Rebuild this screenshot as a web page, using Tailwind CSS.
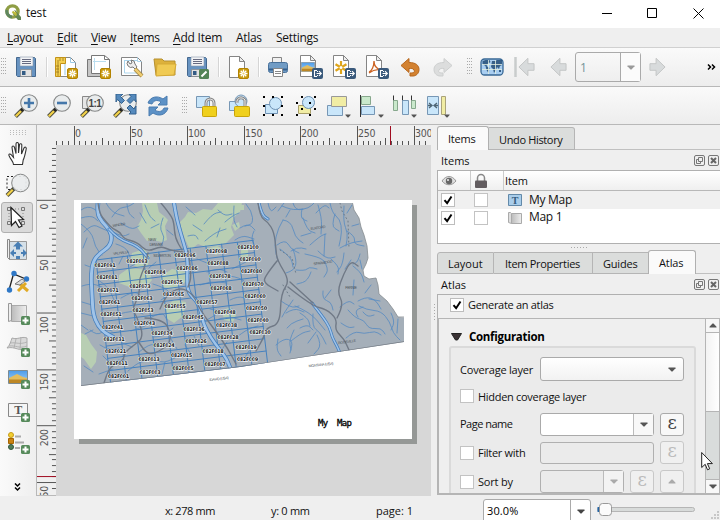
<!DOCTYPE html>
<html lang="en">
<head>
<meta charset="utf-8">
<title>test</title>
<script src="https://cdn.jsdelivr.net/npm/@tailwindcss/browser@4"></script>
</head>
<body class="w-[720px] h-[520px] overflow-hidden bg-[#efefef] font-['Open_Sans','Noto_Sans',sans-serif] text-[12px] leading-4 tracking-[-0.3px] text-[#111] whitespace-nowrap">
<svg class="absolute w-0 h-0">
  <defs>
    <linearGradient id="gray" x1="0" x2="1"><stop offset="0" stop-color="#bbb"/><stop offset="1" stop-color="#eee"/></linearGradient>
    <linearGradient id="sky" x1="0" x2="0" y1="0" y2="1"><stop offset="0" stop-color="#4a9bea"/><stop offset="1" stop-color="#a8d2f5"/></linearGradient>
    <symbol id="floppy" viewBox="0 0 24 24"><path d="M2.5 2.500h18l1 1v18h-18l-1-1z" fill="#6793c1" stroke="#44688f"/><path d="M6 2h13v9H6z" fill="#f2f3f5" stroke="#8799ad" stroke-width=".6"/><path d="M8 4.500h9M8 6.500h9M8 8.500h9" stroke="#666a80"/><path d="M6.500 14.500h11v7h-11z" fill="#e2e2e2" stroke="#858585" stroke-width=".7"/><path d="M8 16h3.500v4H8z" fill="#335c85"/></symbol>
    <symbol id="star" viewBox="0 0 11 11"><rect x=".5" y=".5" width="10" height="10" rx="1.500" fill="#c9990c" stroke="#b38300"/><path d="M5.500 1.500v8M1.500 5.500h8M2.700 2.700l5.600 5.600M8.300 2.700L2.700 8.300" stroke="#fff" stroke-width="1.300"/><circle cx="5.500" cy="5.500" r="1.100" fill="#edcf68"/></symbol>
    <symbol id="export" viewBox="0 0 11 11"><rect width="11" height="11" rx="2" fill="#39597b"/><path d="M5 2.500H2.500v6H5M4.500 5.500H9M7 3.200l2.300 2.300L7 7.800M5.500 3v1M5.500 7v1" stroke="#fff" stroke-width="1.100" fill="none"/></symbol>
    <symbol id="plus" viewBox="0 0 9 9"><rect width="9" height="9" rx="1.500" fill="#568a5b"/><path d="M4.500 1.500v6M1.500 4.500h6" stroke="#fff" stroke-width="2"/></symbol>
    <symbol id="page" viewBox="0 0 24 24"><path d="M3.500 .5h10l5 5v16h-15z" fill="#fff" stroke="#858585"/><path d="M13.500 .5v5h5z" fill="#eee" stroke="#858585"/></symbol>
    <symbol id="lens" viewBox="0 0 24 24"><path d="M1.500 22.500L9 15" stroke="#4a4a3b" stroke-width="4"/><path d="M1.800 22.200L7.500 16.500" stroke="#f3d249" stroke-width="2.200"/><path d="M7 17l3-3" stroke="#252525" stroke-width="3"/><circle cx="15" cy="9" r="8.300" fill="#e9eced" stroke="#858787" stroke-width="1.100"/></symbol>
    <symbol id="padlock" viewBox="0 0 16 20"><path d="M4 11V6a4 4 0 0 1 8 0v5" fill="none" stroke="#8a8a8a" stroke-width="3"/><path d="M4 11V6a4 4 0 0 1 8 0v5" fill="none" stroke="#ddd" stroke-width="1"/><rect x=".5" y="9.500" width="14" height="10" rx=".8" fill="#f0d01c" stroke="#c9a409"/></symbol>
    <symbol id="arrowL" viewBox="0 0 18 20"><path d="M1 10L10.500 .8v5.700H17v7h-6.500v5.700z" fill="#d8dbdc" stroke="#c2c5c5"/></symbol>
    <symbol id="dd" viewBox="0 0 8 5"><path d="M.5 .5h7v.8L4.500 4.500h-1L.5 1.300z" fill="currentColor"/></symbol>
    <symbol id="dots" viewBox="0 0 5 20"><path d="M.5 1v18M2.500 1v18M4.500 1v18" stroke="#aaa" stroke-dasharray="1 2"/></symbol>
    <symbol id="sep" viewBox="0 0 2 20"><path d="M.5 0v20" stroke="#d5d5d5"/><path d="M1.500 0v20" stroke="#fff"/></symbol>
    <symbol id="check" viewBox="0 0 14 14"><rect x=".5" y=".5" width="13" height="13" fill="#fff" stroke="#bdbdbd"/><path d="M3.500 7.200l2.600 3L10.500 3.500" fill="none" stroke="#000" stroke-width="2"/></symbol>
    <symbol id="box" viewBox="0 0 14 14"><rect x=".5" y=".5" width="13" height="13" fill="#fff" stroke="#c3c3c3"/></symbol>
    <symbol id="float" viewBox="0 0 11 11"><rect x=".5" y=".5" width="10" height="10" rx="1.500" fill="none" stroke="#777"/><path d="M4.500 2.500h4v4h-4zM6.500 6.500v2h-4v-4h2" fill="none" stroke="#777"/></symbol>
    <symbol id="close" viewBox="0 0 11 11"><rect x=".5" y=".5" width="10" height="10" rx="1.500" fill="none" stroke="#777"/><path d="M3 3l5 5M8 3L3 8" stroke="#666" stroke-width="2"/></symbol>
    <symbol id="picture" viewBox="0 0 20 14"><path d="M.5 .5h19v13H.5z" fill="url(#sky)" stroke="#7c8b92"/><path d="M1 8l8-4 6 3 4 1v5H1z" fill="#e2bd60"/><path d="M1 9.500h18V13H1z" fill="#bd8725"/></symbol>
  </defs>
</svg>

<header class="h-7 bg-white flex items-center pl-[5px]">
  <svg class="w-4 h-4 -mt-1" viewBox="0 0 16 16"><circle cx="7.500" cy="7.500" r="5.600" fill="none" stroke="#8f9e45" stroke-width="3.400"/><path d="M7 13a5.600 5.600 0 0 1-5-7" fill="none" stroke="#5f8660" stroke-width="3"/><path d="M7 6h3l6 7v3h-3L7 9z" fill="#648653"/><path d="M8 7l3 3" stroke="#edcc3a" stroke-width="2"/><circle cx="7.500" cy="7.500" r="2.300" fill="#fff"/><path d="M7.500 7.500l4 4" stroke="#b8b83a" stroke-width="2"/></svg>
  <span class="ml-[5px] -mt-[3px] tracking-[-0.2px]">test</span>
  <svg class="ml-auto mr-[16px] -mt-[3px] w-[103px] h-3" viewBox="0 0 103 12"><path d="M1 6.500h10M46.500 1.500h9v9h-9zM92.500 1.500l10 10M102.500 1.500l-10 10" fill="none" stroke="#000"/></svg>
</header>
<nav class="h-[19px] flex items-center bg-[#efefef]">
  <span class="w-[49px] ml-[7px]"><u class="underline-offset-2">L</u>ayout</span>
  <span class="w-[34px] ml-px"><u class="underline-offset-2">E</u>dit</span>
  <span class="w-[39px]"><u class="underline-offset-2">V</u>iew</span>
  <span class="w-[43px]"><u class="underline-offset-2">I</u>tems</span>
  <span class="w-[63px] tracking-[-0.2px]"><u class="underline-offset-2">A</u>dd Item</span>
  <span class="w-[40px]">Atlas</span>
  <span>Settings</span>
</nav>

<div class="h-10 border-t border-b border-t-[#d0d0d0] border-b-[#b8b8b8] bg-linear-to-b from-[#fafafa] to-[#ededed] flex items-center">
  <svg class="w-[5px] h-5 ml-px mr-1 shrink-0"><use href="#dots"/></svg>
  <div class="w-[33px] pr-px flex justify-center shrink-0"><svg class="w-6 h-6"><use href="#floppy"/></svg></div>
  <div class="w-[7px] flex justify-center shrink-0"><svg class="w-[2px] h-5"><use href="#sep"/></svg></div>
  <div class="w-[33px] pr-px flex justify-center shrink-0"><svg class="w-6 h-6" viewBox="0 0 24 24"><path d="M4.500 2.500h12l5 5v14h-17z" fill="#fff" stroke="#858585"/><path d="M16.500 2.500v5h5M11 7v13" fill="none" stroke="#9bc8e5"/><path d="M1.500 2.500h10v6h-5v13h-5z" fill="#f3cf50" stroke="#c29219"/><path d="M4 5v16M6 3v3M9 3v3M2 11h3M2 14h3M2 17h3" stroke="#9b761d" stroke-width=".8"/><use href="#star" x="13" y="13" width="11" height="11"/></svg></div>
  <div class="w-[33px] pr-px flex justify-center shrink-0"><svg class="w-6 h-6" viewBox="0 0 24 24"><path d="M.5 4.500h5v13h13v4H.500z" fill="#c5c5c5" stroke="#777"/><path d="M4.500 .5h13l5 4v14h-18z" fill="#fff" stroke="#777"/><path d="M17.500 .5v4h5" fill="none" stroke="#777"/><path d="M7.500 3v12M6 6.500h13" stroke="#b9ddef"/><use href="#star" x="13" y="13" width="11" height="11"/></svg></div>
  <div class="w-[33px] pr-px flex justify-center shrink-0"><svg class="w-6 h-6" viewBox="0 0 24 24"><path d="M1.500 2.500h16l4 4v14h-20z" fill="#fff" stroke="#858585"/><path d="M17.500 2.500v4h4M4 5.500h13M4.500 5v13h14" fill="none" stroke="#abd5ed"/><path d="M8 6a4 4 0 0 0 5 6l2 2 2-2-2-3a4 4 0 0 0-4-4l1 3-2 1z" fill="#eee" stroke="#777"/><path d="M15 14l7 7" stroke="#9d8041" stroke-width="4"/><path d="M15 14l7 7" stroke="#edcb70" stroke-width="2.500"/></svg></div>
  <div class="w-[33px] pr-px flex justify-center shrink-0"><svg class="w-6 h-6" viewBox="0 0 24 24"><path d="M1 4h8l2 2h11v14H3z" fill="#ddb13c" stroke="#b58f2e"/><path d="M4 9h19l-2 11-18 1z" fill="#f0ca53" stroke="#d5a934"/></svg></div>
  <div class="w-[33px] pr-px flex justify-center shrink-0"><svg class="w-6 h-6" viewBox="0 0 24 24"><use href="#floppy" width="24" height="24" x="-1"/><rect x="13" y="14" width="10" height="10" rx="1.500" fill="#548457"/><path d="M15.500 21.500l5-5" stroke="#fff" stroke-width="2"/></svg></div>
  <div class="w-[7px] flex justify-center shrink-0"><svg class="w-[2px] h-5"><use href="#sep"/></svg></div>
  <div class="w-[33px] pr-px flex justify-center shrink-0"><svg class="w-6 h-6" viewBox="0 0 24 24"><use href="#page" width="24" height="24" y="1"/><use href="#star" x="12" y="13" width="11" height="11"/></svg></div>
  <div class="w-[7px] flex justify-center shrink-0"><svg class="w-[2px] h-5"><use href="#sep"/></svg></div>
  <div class="w-[33px] pr-px flex justify-center shrink-0"><svg class="w-6 h-6" viewBox="0 0 24 24"><path d="M6.500 2.500h9v7h-9z" fill="#f0f0f0" stroke="#858585"/><rect x="2.500" y="7.500" width="19" height="10" rx="2" fill="#719cc5" stroke="#48719b"/><path d="M3 14.500h18" stroke="#345f8d" stroke-width="2"/><path d="M7.500 13.500h9v8h-9z" fill="#fff" stroke="#858585"/><path d="M9 16.500h6M9 18.500h6" stroke="#888"/></svg></div>
  <div class="w-[33px] pr-px flex justify-center shrink-0"><svg class="w-6 h-6" viewBox="0 0 24 24"><use href="#page" width="24" height="24" x="-2" y="0"/><use href="#picture" x="2" y="7" width="14" height="10" preserveAspectRatio="none"/><use href="#export" x="13" y="13" width="11" height="11"/></svg></div>
  <div class="w-[33px] pr-px flex justify-center shrink-0"><svg class="w-6 h-6" viewBox="0 0 24 24"><use href="#page" width="24" height="24" x="-2" y="0"/><path d="M9 6v13M3.500 9.200l11 6.600M14.500 9.200l-11 6.600" stroke="#dfa51a" stroke-width="2.200"/><circle cx="9" cy="12.500" r="1.500" fill="#fff"/><use href="#export" x="13" y="13" width="11" height="11"/></svg></div>
  <div class="w-[33px] pr-px flex justify-center shrink-0"><svg class="w-6 h-6" viewBox="0 0 24 24"><use href="#page" width="24" height="24" x="-2" y="0"/><path d="M4 17c3-1 5-6 5-11 0 5 3 8 7 9-4-1-8 0-12 3" fill="none" stroke="#cc6424" stroke-width="1.300"/><use href="#export" x="13" y="13" width="11" height="11"/></svg></div>
  <div class="w-[33px] pr-px flex justify-center shrink-0"><svg class="w-6 h-6" viewBox="0 0 24 24"><path d="M3 10.500l8-7v4c7 0 10 3 10 7 0 4-3 6.500-6 6.500h-3v-3c4 0 5-1 4-3-1-2-3-1.500-5-1.500v4z" fill="#d38231" stroke="#b7671d"/></svg></div>
  <div class="w-[33px] pr-px flex justify-center shrink-0"><svg class="w-6 h-6" viewBox="0 0 24 24"><path d="M21 10.500l-8-7v4c-7 0-10 3-10 7 0 4 3 6.500 6 6.500h3v-3c-4 0-5-1-4-3 1-2 3-1.500 5-1.500v4z" fill="#dcdddd" stroke="#cdcfcf"/></svg></div>
  <div class="w-4 flex justify-center pl-[3px] shrink-0"><svg class="w-[5px] h-5"><use href="#dots"/></svg></div>
  <div class="w-[33px] pr-px flex justify-center shrink-0"><svg class="w-6 h-6" viewBox="0 0 24 24"><rect x="1" y="4" width="22" height="16" rx="3.500" fill="#a9cef1" stroke="#386895" stroke-width="1.300"/><path d="M2.500 6l3-1h4l1 2-3 2-1 2 3 2-1 5-2-3-1-4-3-2zM12 6h3l2-1h5v5l-2 1-1 3-2-2-1 3-2 3-1-4-2-2zM19 15h2v2h-2z" fill="#224b76" fill-opacity=".85"/><path d="M2 9.500h20M2 14.500h20M8.500 5v14M15.500 5v14" stroke="#e5f0e1" stroke-width=".8"/></svg></div>
  <div class="w-[33px] pr-px flex justify-center shrink-0"><svg class="w-6 h-6" viewBox="0 0 24 24"><path d="M2.500 2v20" stroke="#c9cccc" stroke-width="2.500"/><use href="#arrowL" x="5" y="2" width="17" height="20"/></svg></div>
  <div class="w-[33px] flex justify-center shrink-0"><svg class="w-[17px] h-5"><use href="#arrowL"/></svg></div>
  <div class="w-[66px] h-[30px] border border-[#aaa] rounded-[3px] flex items-center shrink-0 text-[#759398]"><span class="pl-1 w-[45px] pt-[2px]">1</span><div class="w-5 h-7 border-l border-[#aaa] bg-[#fbfbfb] flex items-center justify-center text-[#9a9a9a]"><svg class="w-2 h-[5px]"><use href="#dd"/></svg></div></div>
  <div class="w-[33px] flex justify-center shrink-0"><svg class="w-[17px] h-5 -scale-x-100"><use href="#arrowL"/></svg></div>
  <svg class="w-[9px] h-2 ml-[33px] shrink-0" viewBox="0 0 9 8"><path d="M1 1.500l2.500 2.500L1 6.500M5 1.500L7.500 4 5 6.500" fill="none" stroke="#000" stroke-width="1.500"/></svg>
</div>

<div class="h-[38px] border-b border-[#b8b8b8] bg-linear-to-b from-[#fafafa] to-[#ededed] flex items-center">
  <svg class="w-[5px] h-5 ml-px mr-1 shrink-0"><use href="#dots"/></svg>
  <div class="w-[33px] pr-px flex justify-center"><svg class="w-6 h-6" viewBox="0 0 24 24"><use href="#lens" width="24" height="24"/><path d="M15 4v10M10 9h10" stroke="#4477aa" stroke-width="2.600"/></svg></div>
  <div class="w-[33px] pr-px flex justify-center"><svg class="w-6 h-6" viewBox="0 0 24 24"><use href="#lens" width="24" height="24"/><path d="M10 9h10" stroke="#4477aa" stroke-width="2.600"/></svg></div>
  <div class="w-[33px] pr-px flex justify-center"><svg class="w-6 h-6" viewBox="0 0 24 24"><path d="M2.500 2.500h13v12h-13z" fill="#e5e5e5" stroke="#888"/><use href="#lens" width="24" height="24"/><text x="14.800" y="12.500" text-anchor="middle" font-size="10" font-family="Liberation Sans" font-weight="bold" letter-spacing="-.6" fill="#444">1:1</text></svg></div>
  <div class="w-[33px] pr-px flex justify-center"><svg class="w-6 h-6" viewBox="0 0 24 24"><use href="#lens" width="24" height="24"/><path d="M3 0h7L7.500 2.500l4 4-3 3-4-4L3 8zM16 0h7v8l-2-2.500-4 4-3-3 4-4zM23 20h-7l2-2-4-4 3-3 4 4 2-3z" fill="#558abd" stroke="#32618e"/></svg></div>
  <div class="w-[33px] pr-px flex justify-center"><svg class="w-6 h-6" viewBox="0 0 24 24"><path d="M2 9C4 3 11 1 17 5l4-3v9h-9l3-3c-4-3-8-1-9 2z" fill="#5c91c6" stroke="#4a7cb0"/><path d="M22 14c-2 7-9 9-15 5l-4 3v-9h9l-3 3c4 3 8 1 9-2z" fill="#5c91c6" stroke="#4a7cb0"/></svg></div>
  <div class="w-4 flex justify-center shrink-0 pl-[3px]"><svg class="w-[5px] h-5"><use href="#dots"/></svg></div>
  <div class="w-[33px] pr-px flex justify-center"><svg class="w-6 h-6" viewBox="0 0 24 24"><path d="M1.500 2.500h13v11h-13z" fill="#c9e6fa" stroke="#7797b5"/><use href="#padlock" x="7" y="3" width="16" height="20"/></svg></div>
  <div class="w-[33px] pr-px flex justify-center"><svg class="w-6 h-6" viewBox="0 0 24 24"><path d="M1.500 7.500h11v9h-11z" fill="#c9e6fa" stroke="#7797b5"/><circle cx="13" cy="7" r="6" fill="#c9e6fa" stroke="#7797b5"/><path d="M9 9c-1-5 5-7 8-3v7" fill="none" stroke="#888" stroke-width="3"/><path d="M9 9c-1-5 5-7 8-3v7" fill="none" stroke="#eee"/><rect x="6.500" y="12.500" width="15" height="10" rx="1" fill="#f0d01c" stroke="#c9a409"/></svg></div>
  <div class="w-[33px] pr-px flex justify-center"><svg class="w-6 h-6" viewBox="0 0 24 24"><path d="M4.500 10.500h12v9h-12z" fill="#c9e6fa" stroke="#6e91b3"/><circle cx="14.500" cy="9.500" r="6" fill="#c9e6fa" stroke="#6e91b3"/><path d="M2 2h2v2H2zM11 2h2v2h-2zM20 2h2v2h-2zM2 11h2v2H2zM20 11h2v2h-2zM2 20h2v2H2zM11 20h2v2h-2zM20 20h2v2h-2z"/></svg></div>
  <div class="w-[33px] pr-px flex justify-center"><svg class="w-6 h-6" viewBox="0 0 24 24"><path d="M4.500 11.500h12v8h-12z" fill="#f1eda4" stroke="#aaa06a"/><circle cx="14.500" cy="8.500" r="6" fill="#c9e6fa" stroke="#6e91b3"/><path d="M7 2h2v2H7zM20 2h2v2h-2zM2 8h2v2H2zM7 14h2v2H7zM20 14h2v2h-2zM15 8h2v2h-2zM2 20h2v2H2zM15 20h2v2h-2z"/></svg></div>
  <div class="w-[33px] pr-px flex justify-center text-[#555]"><svg class="w-6 h-6" viewBox="0 0 24 24"><path d="M.5 11.500h15v10h-15z" fill="#c9e6fa" stroke="#7797b5"/><path d="M4.500 2.500h15v10h-15z" fill="#f1eda4" stroke="#999"/><use href="#dd" x="18" y="20" width="6" height="4"/></svg></div>
  <div class="w-[33px] pr-px flex justify-center text-[#555]"><svg class="w-6 h-6" viewBox="0 0 24 24"><path d="M.5 1v22" stroke="#333"/><path d="M1.500 2.500h9v8h-9z" fill="#cae9cc" stroke="#87a88d"/><path d="M1.500 12.500h13v8h-13z" fill="#c9e6fa" stroke="#7797b5"/><use href="#dd" x="18" y="20" width="6" height="4"/></svg></div>
  <div class="w-[33px] pr-px flex justify-center text-[#555]"><svg class="w-6 h-6" viewBox="0 0 24 24"><path d="M.5 1.500v6M9.500 1.500v6M18.500 1.500v6" stroke="#333"/><path d="M.5 6.500h4v10h-4zM18.500 6.500h4v8h-4z" fill="#cae9cc" stroke="#87a88d"/><path d="M9.500 6.500h6v14h-6z" fill="#c9e6fa" stroke="#7797b5"/><use href="#dd" x="18" y="20" width="6" height="4"/></svg></div>
  <div class="w-[33px] pr-px flex justify-center text-[#555]"><svg class="w-6 h-6" viewBox="0 0 24 24"><path d="M1.500 2.500h11v18h-11z" fill="#c9e6fa" stroke="#7797b5"/><path d="M15.500 2.500h4v18h-4z" fill="#f1eda4" stroke="#aaa37a"/><path d="M2 11.500h3M12 11.500H9M3 9l3 2.500L3 14M11 9l-3 2.500 3 2.500" fill="none" stroke="#4e6574" stroke-width="1.300"/><use href="#dd" x="18" y="20" width="6" height="4"/></svg></div>
</div>

<main class="h-[371px] flex">
  <aside class="w-[37px] border-r border-[#b8b8b8] bg-linear-to-r from-[#fafafa] to-[#efefef] pl-px flex flex-col items-center shrink-0">
    <svg class="w-[17px] h-[5px] mt-[5px] mb-[2px] shrink-0" viewBox="0 0 17 5"><path d="M0 .5h17M0 2.500h17M0 4.500h17" stroke="#bbb" stroke-dasharray="1 2"/></svg>
    <div class="h-[32.2px] pr-[1px] flex items-center pt-[2px]"><svg class="w-6 h-6" viewBox="0 0 24 24"><path d="M7.500 22.500c0-3-3-5-4.500-9-.5-1.500 1-2 2-1l2.500 3-1.500-10c0-2 2-2 2.500 0l1.500 6V2c0-2 2.500-2 2.500 0v9l1-8c.3-2 2.500-1.500 2.300.3L15.500 12l2.500-6c.8-1.800 2.600-.8 2.200 1-1 5-1.500 8-3 11l-.7 4.500z" fill="#fff" stroke="#333" stroke-width="1.100"/></svg></div>
    <div class="h-[32.2px] pr-[1px] flex items-center"><svg class="w-[26px] h-[26px]" viewBox="0 0 26 26"><path d="M2 4.500h19v13H2z" fill="none" stroke="#222" stroke-dasharray="2 2"/><path d="M2 23.500l8-8" stroke="#4a4a3b" stroke-width="4"/><path d="M2.200 23.300l5.500-5.500" stroke="#f3d249" stroke-width="2.200"/><circle cx="15.500" cy="11" r="8.800" fill="#e9eced" fill-opacity=".93" stroke="#858787"/></svg></div>
    <div class="h-[32.2px] pr-[3px] flex items-center"><div class="w-8 h-[31px] bg-[#dadada] border border-[#b0b0b0] rounded-[3px] flex items-center justify-center"><svg class="w-6 h-6" viewBox="0 0 24 24"><path d="M4 4h14v14H4z" fill="none" stroke="#888" stroke-dasharray="1 2"/><path d="M2.500 2.500h3v3h-3zM16.500 2.500h3v3h-3zM2.500 16.500h3v3h-3zM16.500 16.500h3v3h-3z" fill="#ddd" stroke="#777"/><path d="M6 2.500l12.500 12-5 .5 3.500 6-3 1.500-3.500-6-4 4z" fill="#fff" stroke="#222" stroke-width="1.200"/></svg></div></div>
    <div class="h-[32.2px] pr-[4px] flex items-center"><svg class="w-6 h-6" viewBox="0 0 24 24"><path d="M4.500 3.500h17v18h-17z" fill="#d5e0e8" stroke="#999"/><path d="M4.500 1.500h-2v18l2 2z" fill="#eee" stroke="#888"/><path d="M13 3.500l5 5h-3v3h-4v-3H8zM5 15l4-4v3h2v2H9v3zM22 15l-4-4v3h-2v2h2v3zM11 18h4v3h-4z" fill="#487fb5"/></svg></div>
    <div class="h-[32.2px] pr-[2px] flex items-center"><svg class="w-6 h-6" viewBox="0 0 24 24"><path d="M3 20L7.500 4 21 9.500" fill="none" stroke="#222" stroke-width="1.300"/><circle cx="3.500" cy="20" r="2.700" fill="#2f78c7"/><circle cx="8" cy="3.500" r="2.700" fill="#2f78c7"/><circle cx="20.500" cy="9" r="2.700" fill="#2f78c7"/><path d="M12 21l8-8M14 14l8 7" stroke="#e1aa24" stroke-width="3"/><path d="M9 14l7-5 3 2-5 4z" fill="#ddd" stroke="#777"/></svg></div>
    <div class="h-[32.2px] pr-[2px] flex items-center"><svg class="w-6 h-6" viewBox="0 0 24 24"><path d="M5.500 3.500h15v16h-15z" fill="url(#gray)" stroke="#aaa"/><path d="M2.500 1.500h3v17l-3 1z" fill="#eee" stroke="#999"/><use href="#plus" x="15" y="14" width="9" height="9"/></svg></div>
    <div class="h-[32.2px] pr-[2px] flex items-center"><svg class="w-6 h-6" viewBox="0 0 24 24"><path d="M6 4c6 2 9-2 15 0v11c-7 3-12-3-20-1 3-3 4-7 5-10z" fill="#d9d9d9" stroke="#aaa"/><path d="M4 9c7-1 9 2 17-1M3 12c7-1 10 3 18 0M10 5l-2 9M15 3l-1 12" fill="none" stroke="#aaa" stroke-width=".8"/><use href="#plus" x="15" y="14" width="9" height="9"/></svg></div>
    <div class="h-[32.2px] pr-[2px] flex items-center"><svg class="w-6 h-6" viewBox="0 0 24 24"><use href="#picture" x="2" y="4" width="20" height="14"/><use href="#plus" x="15" y="14" width="9" height="9"/></svg></div>
    <div class="h-[32.2px] pr-[2px] flex items-center"><svg class="w-6 h-6" viewBox="0 0 24 24"><path d="M2.500 4.500h19v13h-19z" fill="#f5f5f5" stroke="#888"/><text x="12" y="15" text-anchor="middle" font-family="Liberation Serif" font-size="12" font-weight="bold" fill="#555">T</text><use href="#plus" x="15" y="14" width="9" height="9"/></svg></div>
    <div class="h-[32.2px] pr-[2px] flex items-center"><svg class="w-6 h-6" viewBox="0 0 24 24"><circle cx="5" cy="4" r="2.500" fill="#f3cf31" stroke="#c69b18"/><path d="M2.500 7.500h5v5h-5z" fill="#c98211" stroke="#a56400"/><circle cx="5" cy="16" r="2.500" fill="#517d59" stroke="#31573b"/><path d="M9 5.500h6M9 11.500h9M9 17h5" stroke="#aaa" stroke-width="1.800"/><use href="#plus" x="15" y="14" width="9" height="9"/></svg></div>
    <svg class="w-[7px] h-[9px] mt-[24px] mr-[2px] shrink-0" viewBox="0 0 7 9"><path d="M1 .5l2.500 2.500L6 .5M1 4.500L3.500 7 6 4.500" fill="none" stroke="#000" stroke-width="1.500"/></svg>
  </aside>

  <section class="w-[394px] h-[371px] shrink-0 grid grid-cols-[19px_375px] grid-rows-[20px_351px]">
    <svg class="col-span-2 w-[394px] h-5" viewBox="37 125 394 20" font-family="DejaVu Sans Condensed" font-size="10.500" fill="#555"><g id="hruler"></g><path d="M390.500 126v19" stroke="#a00c20"/></svg>
    <svg class="w-[19px] h-[351px] border-b border-[#b8b8b8]" viewBox="37 145 19 351" font-family="DejaVu Sans Condensed" font-size="10.500" fill="#555"><g id="vruler"></g><path d="M37 477.500h19" stroke="#a00c20"/></svg>
    <div class="bg-[#d7d7d7] pl-[18px] pt-[55px]">
      <div class="w-[338px] h-[239px] bg-white shadow-[5px_5px_0_#959896] pl-[7px] pt-[3px] relative">
        <svg class="w-[324px] h-[190px]" viewBox="81 203 324 190">
          <defs><clipPath id="land"><path d="M81 203H352.500L354 210 359 218 361 227 364 235 367 246 368 258 366 264 363 270 364 276 369 279 376 278 378 285 379 294 387 301 393 309 398 317 404 317.500V342L240 367 81 386z"/></clipPath></defs>
          <g clip-path="url(#land)" fill="none" stroke-linejoin="round" stroke-linecap="round">
            <path d="M81 203h324v190H81z" fill="#a5afb9"/>
            <g fill="#b8ceb3">
              <path d="M142 203h15l2 9 5 4 4 4-3 6 2 14-5 2-10-2-5 1-6-8-4-6 4-7 2-9z"/>
              <path d="M180 222l5-5 3-5 8 1 7-4 9 1 6-7h24l-2 9-6 5-3 10 3 8-8 8-8 3-12 1-8-3-8 6-5-11-3-8z"/>
              <path d="M232 225l7-3 1 5-5 4zM132 253l12-4 6 7-2 9-9 3-9-5zM119 275l10-7 20 2 3 10-6 7-14 1-13-5zM160 277l12-8 14 3 1 9-13 8-11-2zM166 306l8-6 12 2-3 14-9 7-8-5zM222 311l8-4 6 8-3 7-9-2zM81 333l5 2 5 9 6 8-1 10-5 7-7-10-3-2zM240 205h4v5h-4zM241 250h7v7h-7zM205 249l12-3 9 4-10 5z"/>
            </g>
            <g stroke="#5a8dc2" stroke-width=".85" class="winding">
              <path d="M81 210l7-5 12 8M81 218l10-3 7 6M84 232l8-8 9 4 9 4M81 224l11 8 3 15 7 8M83 248l4-10M106 203l5 9 13 4M112 217l6-9 10-1 6-4M127 204l1 9 6 5M113 232l9 5 7-3M116 244l10 3 4 10M121 223l10 7 8-4M140 213l6 10M145 205l4 11 6 5M151 228l8-4M163 218l-4 10 6 9-4 9M167 230l6 5M186 207l9 8M193 225l9 6M204 224l8-10 9-2M218 210l6 6 8-2M205 241l9-8 12-4M225 222l7-6 7-3M188 236l7-2 3 5M234 206l-1 13 4 8M220 228l-3 9M246 204l6 7 1 13-8 2M240 228l8-5 7 7M235 240l7-5 12 4M254 231l-4 8 8 10M268 203l2 10 6-6M278 211l6-8M282 206l9 4 12-1M293 203l2 8 14-3 5-5M286 217l4-7M302 209l-2 9 7 3M303 218l4 12 8 3M283 220l-5 8-4 18 4 15M283 220l8 1 4 16 8 6M277 245l8-6 6 10 8 4M291 251l6-4 9 2M316 213l8-9 5 4M318 205l4 13-1 16M330 203l2 10 8 6 2 13-3 14M344 206l-1 16 5 11-2 13M352 205l-5 8M352 226l7-2M347 231l8 5-1 8 10 2M340 248l9-5 13-2M335 214l-4 12 8 5M325 234l-1 22M310 245l10-9 6-2M318 251l8 8 9-2M301 236l10-3M280 249l11 8 2 10M293 249l4 12-3 9-8 3M296 270l9 1 4-4 8 2M311 272l-3 9-11 3M305 254l14 3 6 5M324 261l5 8-5 8M331 259l8 7-1 8M344 253l-1 11-6 8M351 260l-6 9M360 254l-2 8-5 2M281 301l10 7 8-2M293 300l-7 10-4 7M286 313l8-5 10 4M295 306l15 6 15 18M300 313l8 5 2 8M313 314l-1 13 8 5 6 12M287 328l4-5 12-4M291 341l10-8 9-2M278 339l-2 10 5 7M276 345l8-7 9 3-3 12M294 330l-5 10 2 10M300 328l7-4 6 6M308 343l8-11M317 335l5 10-8 9M340 307l8-7 6 4M348 310l7 8 9 2 5 9 12-1 4 6M341 323l7 5 6-1M346 338l8-7 10 3 11-3 6 4M358 317l-4-6 9-4M359 306l8 4 14 1 9 11 3 11 7 7M369 299l11 2M358 301l7-4 10 2 6 10M363 312l4 5 7-2M391 313l4 8-4 9M398 319l-1 14M331 290l-6 8M323 291l-1 8 9 3 2 8M353 266l8 6 3 10M360 260l2 9M354 280l-1 15M371 285l-6 8"/>
              <path d="M85 265l8 3M82 286l9-3 11 4M82 302l10 3M98 280l10 6 6 14M81 313l12 3M90 330l7 6 9-7 6 2M81 325l7 5M85 334l8-4M84 366l9 6M100 345l8 5 11-2M103 356l7 8 9-4M99 374l14-5M119 264l4-8M130 267l10-6M149 268l7-6M121 298l12-7 7 4M119 314l15-4 9 4M150 318l12-7 5 9M131 331l14-5M122 343l10 4M139 352l11-9 8 4M128 371l9-8 9-2M153 358l8 6 14-6M162 374l3-12M153 284l13 4 5 7M161 300l8-5M173 328l-8 8-12 1M177 349l-6-10M191 354l-6-9M199 346l-5-10M205 321l14-8M207 272l10-4 10 4M200 285l10-4 17 2M210 309l10 3 12-3M216 320l11-4 14 4M237 337l10-8 11-3M230 300l8-4 10 3M221 351l6-9M249 351l-5 8M230 276l11 2 6 6M197 259l10 4M232 269l14-7"/>
            </g>
            <g stroke="#4581bf" stroke-width="1" id="grid"></g>
            <g class="winding">
              <path d="M98 203l-1 10 5 9 8 8 2 9-3 8-9 6-7 8-2 15 1 18 1 20 5 12 7 7 8 4" stroke="#427dbd" stroke-width="4.500"/><path d="M98 203l-1 10 5 9 8 8 2 9-3 8-9 6-7 8-2 15 1 18 1 20 5 12 7 7 8 4" stroke="#a0c4e9" stroke-width="3"/>
              <path d="M174 203l2 12 3 12 4 14 5 17-1 20 1 15 9 8 4 10 2 12 8 15 9 12 7 9 5 14" stroke="#427dbd" stroke-width="4"/><path d="M174 203l2 12 3 12 4 14 5 17-1 20 1 15 9 8 4 10 2 12 8 15 9 12 7 9 5 14" stroke="#a0c4e9" stroke-width="2.500"/>
              <path d="M259 203l3 12 6 4M109 229l9 10 20 7 10 12M312 303l11 14 7 11 2 9 5 9 3 7" stroke="#427dbd" stroke-width="3"/><path d="M259 203l3 12 6 4M109 229l9 10 20 7 10 12M312 303l11 14 7 11 2 9 5 9 3 7" stroke="#a0c4e9" stroke-width="1.500"/>
            </g>
            <g stroke="#707986" stroke-width="1.400" class="winding">
              <path d="M98 203l1 10 8 10 6 6 7 3 4 7 13 3 10 10 14-6 8 4 14 2M161 203l10 12 3 8 1 15 7 12M258 203l2 14 8 5 6 10 2 17 1 11 13 21-9 12-1 31-14 4-2 9-8 14M277 261l-12 15-1 7 14 8M288 287l24 19 14 3 11 10-2 11 9 9 5 11M313 303l-23-21M337 318l7-13-7-13 7-19 7-12 7 5M148 253l-3 14-6 12 1 15-8 15 5 8 7 20-11 9-8 6-2 9-9 3-6 7-4 12M145 318l18 1 8 14-2 12-15 9-8-1-8-12M160 309l5-13 15-9 13 7 7 16 17 23 11 16 8 15M188 251l4 24-4 12"/>
            </g>
            <path d="M81 386l159-19 164-25" stroke="#777e87" stroke-width="1.400"/>
            <path d="M340 203l2 8 6 10 1 28M283 285l7 12M280 250l12 8 4 16" stroke="#6d7b88" stroke-width="1" stroke-dasharray="1 3"/>
          </g>
          <path d="M352.500 203L354 210l5 8 2 9 3 8 3 11 1 12-2 6-3 6 1 6 5 3 7-1 2 7 1 9 8 7 6 8 5 8h6" fill="none" stroke="#858b8f" stroke-width=".8"/>
          <g id="towns" font-family="Liberation Sans" font-size="3.600" fill="#4a5058" text-anchor="middle">
            <text x="119" y="226" transform="rotate(-8 119 226)">WINDER</text><text x="152" y="241">NEW</text><text x="156" y="246">DENVER</text><text x="121" y="254" transform="rotate(-8 121 254)">VALHALLA</text><text x="162" y="257">SILVERTON</text><text x="318" y="229" transform="rotate(-8 318 229)">ELKFORD</text><text x="323" y="264" transform="rotate(-8 323 264)">SPARWOOD</text><text x="351" y="289">FERNIE</text><text x="347" y="343" transform="rotate(-8 347 343)">ROOSVILLE</text><text x="219" y="380" transform="rotate(-6 219 380)">IDAHO (USA)</text><text x="321" y="366" transform="rotate(-6 321 366)">MONTANA (USA)</text>
          </g>
          <g id="sheets" font-family="DejaVu Sans" font-size="5" font-weight="bold" fill="#222" stroke="#e9eef2" stroke-width="1.300" paint-order="stroke" text-anchor="middle"></g>
        </svg>
        <span class="absolute left-[244px] top-[215px] font-['DejaVu_Sans_Mono',monospace] text-[9px] text-black tracking-[-0.65px] leading-4 whitespace-pre [-webkit-text-stroke:0.3px_black]">My  Map</span>
      </div>
    </div>
  </section>

  <section class="w-[289px] pl-[6px] shrink-0 flex flex-col relative text-[11px]">
    <svg class="absolute left-[2px] top-[178px] w-[3px] h-[18px]" viewBox="0 0 3 18"><path d="M1.500 1v17" stroke="#aaa" stroke-dasharray="1 2"/></svg>
    <div class="flex items-end h-[25px] shrink-0">
      <div class="w-[52px] h-6 border border-b-0 border-[#b0b0b0] rounded-t-[3px] bg-[#fafafa] pl-[10px] pt-[4px] leading-4 tracking-[-0.2px]">Items</div>
      <div class="w-[86px] h-[23px] border border-l-0 border-[#b5b5b5] rounded-tr-[3px] bg-[#dbdddc] pl-[10px] pt-[4px] tracking-[-0.35px]">Undo History</div>
      <div class="grow border-b border-[#c0c0c0]"></div>
    </div>
    <div class="h-5 flex items-center pl-1 shrink-0"><span class="pt-px tracking-[0px]">Items</span><svg class="w-[11px] h-[11px] ml-auto mr-[3px]"><use href="#float"/></svg><svg class="w-[11px] h-[11px] mr-px"><use href="#close"/></svg></div>
    <div class="h-[74px] border border-r-0 border-[#b0b0b0] bg-white shrink-0">
      <div class="h-5 border-b border-[#b8b8b8] bg-linear-to-b from-white to-[#efefef] flex items-center">
        <div class="w-[33px] h-full border-r border-[#ccc] pl-[3px] flex items-center"><svg class="w-4 h-3" viewBox="0 0 16 12"><path d="M1 6c4-6 10-6 14 0-4 5-10 5-14 0z" fill="#ddd" stroke="#999"/><circle cx="8" cy="6" r="3.200" fill="#666"/><circle cx="7" cy="5" r="1" fill="#eee"/></svg></div>
        <div class="w-[33px] h-full border-r border-[#ccc] pl-1 flex items-center"><svg class="w-3 h-4" viewBox="0 0 12 16"><path d="M2.500 8V5a3.500 3.500 0 0 1 7 0v3" fill="none" stroke="#888" stroke-width="1.500"/><rect x="0" y="7.500" width="12" height="7.500" rx="1" fill="#625c5f"/></svg></div>
        <span class="pl-[1px] tracking-[-0.1px]">Item</span>
      </div>
      <div class="h-[18px] bg-[#f0f0f0] flex items-center text-[12px]"><svg class="w-[14px] h-[14px] ml-[3px]"><use href="#check"/></svg><svg class="w-[14px] h-[14px] ml-[19px]"><use href="#box"/></svg>
        <svg class="w-[14px] h-3 ml-[20px] mr-[7px]" viewBox="0 0 14 12"><path d="M.5 .5h13v11H.500z" fill="#a9cdea" stroke="#6289a9"/><text x="7" y="9.500" text-anchor="middle" font-family="Liberation Serif" font-size="10" font-weight="bold" fill="#345b7d">T</text></svg><span class="tracking-[-0.3px]">My Map</span></div>
      <div class="h-[18px] flex items-center text-[12px]"><svg class="w-[14px] h-[14px] ml-[3px]"><use href="#check"/></svg><svg class="w-[14px] h-[14px] ml-[19px]"><use href="#box"/></svg>
        <svg class="w-[14px] h-3 ml-[20px] mr-[7px]" viewBox="0 0 14 12"><path d="M3.500 1.500h10v10h-10z" fill="url(#gray)" stroke="#aaa"/><path d="M.5 .5h2l1 1v10l-3-1z" fill="#ddd" stroke="#aaa"/></svg><span class="-mt-[2px] tracking-[-0.3px]">Map 1</span></div>
    </div>
    <div class="h-[6px] flex justify-center items-center shrink-0"><svg class="w-4 h-px" viewBox="0 0 16 1"><path d="M0 .5h16" stroke="#aaa" stroke-dasharray="1 2"/></svg></div>
    <div class="flex items-end h-6 shrink-0">
      <div class="w-[57px] h-[22px] border border-[#b5b5b5] rounded-tl-[3px] bg-[#dbdddc] pl-[10px] pt-[3px] tracking-[0px]">Layout</div>
      <div class="w-[99px] h-[22px] border border-l-0 border-[#b5b5b5] bg-[#dbdddc] pl-[11px] pt-[3px]">Item Properties</div>
      <div class="w-[55px] h-[22px] border-y border-[#b5b5b5] bg-[#dbdddc] pl-[10px] pt-[3px] tracking-[-0.2px]">Guides</div>
      <div class="w-[48px] h-6 border border-b-0 border-[#b0b0b0] rounded-t-[3px] bg-[#fafafa] pl-[10px] pt-[4px] tracking-[-0.1px]">Atlas</div>
      <div class="grow border-b border-[#c0c0c0]"></div>
    </div>
    <div class="h-5 flex items-center pl-1 shrink-0"><span class="pt-px tracking-[0px]">Atlas</span><svg class="w-[11px] h-[11px] ml-auto mr-[3px]"><use href="#float"/></svg><svg class="w-[11px] h-[11px] mr-px"><use href="#close"/></svg></div>
    <div class="h-6 border-t border-l border-[#b0b0b0] flex items-center pl-[12px] pb-[3px] shrink-0"><svg class="w-[14px] h-[14px] mr-1"><use href="#check"/></svg><span>Generate an atlas</span></div>
    <div class="h-[177px] border-2 border-t border-r border-[#b5b5b5] flex shrink-0 overflow-hidden">
      <div class="w-[266px] h-[175px] pl-[10px] overflow-hidden shrink-0">
        <div class="h-[27px] flex items-center pt-[8px] pl-[2px]"><svg class="w-[11px] h-2 mr-[7px]" viewBox="0 0 11 8"><path d="M.5 .5h10l-4 6.500h-2z" fill="#3b3335" stroke="#222"/></svg><span class="font-bold text-black text-[11.5px] tracking-[-0.3px]">Configuration</span></div>
        <div class="w-[247px] h-[170px] border-2 border-[#dadada] rounded-[3px] bg-[#ebebeb] pl-[9px] pt-[9px]">
          <div class="flex h-6 mb-[8px] items-center"><span class="w-[80px] pt-[2px] tracking-[-0.2px]">Coverage layer</span><div class="w-36 h-6 border border-[#aaa] rounded-[3px] bg-linear-to-b from-white to-[#f2f2f2] flex items-center justify-end pr-[7px] text-[#555]"><svg class="w-2 h-[5px]"><use href="#dd"/></svg></div></div>
          <div class="flex h-[14px] mb-[9px] items-center"><svg class="w-[14px] h-[14px] mr-1"><use href="#box"/></svg><span class="pt-[2px]">Hidden coverage layer</span></div>
          <div class="flex h-6 mb-[5px] items-center"><span class="w-[80px] tracking-[-0.5px]">Page name</span><div class="w-[114px] h-[23px] border border-[#aaa] rounded-[3px] bg-white flex justify-end text-[#555] mr-[6px]"><div class="w-5 border-l border-[#bbb] flex items-center justify-center bg-[#f8f8f8]"><svg class="w-2 h-[5px]"><use href="#dd"/></svg></div></div><div class="w-6 h-[23px] border border-[#aaa] rounded-[3px] bg-[#f8f8f8] font-['DejaVu_Serif',serif] text-[18px] leading-[17px] text-center text-[#444]">ε</div></div>
          <div class="flex h-[23px] mb-[6px] items-center"><svg class="w-[14px] h-[14px] mr-1"><use href="#box"/></svg><span class="w-[62px] pt-px">Filter with</span><div class="w-[114px] h-[22px] border border-[#b0b0b0] rounded-[3px] mr-[6px]"></div><div class="w-6 h-[23px] border border-[#c8c8c8] rounded-[3px] bg-[#f0f0f0] font-['DejaVu_Serif',serif] text-[18px] leading-[17px] text-center text-[#bbb]">ε</div></div>
          <div class="flex h-[23px] items-center"><svg class="w-[14px] h-[14px] mr-1"><use href="#box"/></svg><span class="w-[62px] pt-px tracking-[-0.2px]">Sort by</span><div class="w-[84px] h-[23px] border border-[#b0b0b0] rounded-[3px] mr-[6px] flex justify-end text-[#aaa]"><div class="w-5 border-l border-[#bbb] flex items-center justify-center bg-[#f3f3f3]"><svg class="w-2 h-[5px]"><use href="#dd"/></svg></div></div><div class="w-6 h-[23px] border border-[#c8c8c8] rounded-[3px] bg-[#f0f0f0] font-['DejaVu_Serif',serif] text-[18px] leading-[17px] text-center text-[#bbb] mr-[6px]">ε</div><div class="w-6 h-[23px] border border-[#c8c8c8] rounded-[3px] bg-[#f0f0f0] flex items-center justify-center text-[#aaa]"><svg class="w-2 h-[5px] rotate-180"><use href="#dd"/></svg></div></div>
        </div>
      </div>
      <div class="w-[14px] border-l border-[#b5b5b5] flex flex-col bg-[#d9dcdb] text-[#555]">
        <div class="h-[14px] border-b border-[#b5b5b5] bg-[#f6f6f6] flex items-center justify-center shrink-0"><svg class="w-2 h-[5px] rotate-180"><use href="#dd"/></svg></div>
        <div class="h-[79px] border-b border-[#b5b5b5] bg-linear-to-r from-[#f3f3f3] to-white shrink-0"></div>
        <div class="h-[14px] mt-auto border-t border-[#b5b5b5] bg-[#f8f8f8] flex items-center justify-center shrink-0"><svg class="w-2 h-[5px]"><use href="#dd"/></svg></div>
      </div>
    </div>
  </section>
</main>

<footer class="h-6 bg-[#efefef] flex items-center overflow-hidden relative text-[11px]">
  <span class="ml-[165px] w-[106px] pt-[6px] tracking-[-0.4px]">x: 278 mm</span><span class="w-[105px] pt-[6px] tracking-[-0.3px]">y: 0 mm</span><span class="w-[107px] pt-[6px] tracking-[0px]">page: 1</span>
  <div class="w-[108px] h-[24px] mt-[6px] border border-[#aaa] rounded-[3px] bg-white flex items-center justify-between pl-[3px] shrink-0 text-black"><span class="tracking-[0.1px]">30.0%</span><div class="w-5 h-full border-l border-[#aaa] flex items-center justify-center text-[#444]"><svg class="w-2 h-[5px]"><use href="#dd"/></svg></div></div>
  <svg class="w-[100px] h-[14px] ml-[6px] mt-[4px] shrink-0" viewBox="0 0 100 14"><rect x=".5" y="4.500" width="97" height="4" rx="2" fill="#d8dbda" stroke="#b5b5b5"/><path d="M1.500 4v5" stroke="#2364a6" stroke-width="2"/><rect x="2.500" y=".5" width="12" height="12" rx="3" fill="#fbfbfb" stroke="#999"/></svg>
  <svg class="w-[9px] h-[9px] ml-auto self-end" viewBox="0 0 9 9"><path d="M6 1h2M3 4h2M6 4h2M0 7h2M3 7h2M6 7h2" stroke="#bbb" stroke-width="1.500"/></svg>
</footer>

<svg class="absolute left-[701px] top-[451px] w-3 h-5" viewBox="0 0 12 20"><path d="M.7 1.500v15l3.500-3.200 2.300 5.500 2.200-1-2.300-5.200h5z" fill="#fff" stroke="#222"/></svg>

<script>
// Rulers: one tick per 5 mm, a label per 50 mm
const step = 56.68 / 10;
let h = '', v = '';
for (let i = -3; i < 63; i++) {
  const x = Math.floor(74 + i * step) + .5;
  if (x > 431) break;
  const top = i % 10 === 0 ? 126 : i % 5 === 0 ? 138 : 141;
  h += `<path d="M${x} ${top}V145" stroke="#555"/>`;
  if (i % 10 === 0) h += `<text x="${x + .5}" y="137" letter-spacing="-.3">${i * 5}</text>`;
}
for (let i = -9; i < 52; i++) {
  const y = Math.floor(200 + i * step) + .5;
  const left = i % 10 === 0 ? 37 : i % 5 === 0 ? 49 : 52;
  v += `<path d="M${left} ${y}H56" stroke="#555"/>`;
  if (i >= 0 && i % 10 === 0) v += `<text text-anchor="end" transform="translate(48 ${y + 3.5}) rotate(-90)" letter-spacing="-.3">${i * 5}</text>`;
}
hruler.innerHTML = h;
vruler.innerHTML = v;

// Round the corners of streams and roads with quadratic curves through segment midpoints
for (const p of document.querySelectorAll('.winding path')) {
  const out = p.getAttribute('d').split('M').filter(Boolean).map(line => {
    const n = line.match(/-?\d*\.?\d+/g).map(Number);
    const pts = [[n[0], n[1]]];
    for (let i = 2; i < n.length; i += 2) {
      const [x, y] = pts[pts.length - 1];
      pts.push([x + n[i], y + n[i + 1]]);
    }
    let d = `M${pts[0]}`;
    for (let i = 1; i < pts.length - 1; i++) {
      const a = pts[i], b = pts[i + 1];
      d += `Q${a} ${(a[0] + b[0]) / 2},${(a[1] + b[1]) / 2}`;
    }
    return d + `L${pts[pts.length - 1]}`;
  });
  p.setAttribute('d', out.join(''));
}

// Map sheet grid
let g = '';
for (let i = 0; i <= 10; i++) {
  const x = 96 + 15.7 * i, y = 260 - 1.97 * i;
  g += `<path d="M${x} ${y}l14.500 122"/>`;
}
for (let j = 0; j <= 10; j++) {
  const x = 96 + 1.45 * j, y = 260 + 12.3 * j;
  g += `<path d="M${x} ${y}l157 -19.700"/>`;
}
grid.innerHTML = g;

const columns = [
  [['091',105,265],['081',107,277.5],['071',108,290],['061',109.5,302],['051',111,314.5],['041',112.5,327],['031',114,339],['021',115.5,351.5],['011',117,363.5],['001',118.5,376]],
  [['093',137,261.5],['084',155,272],['073',140,286],['063',142,298.5],['053',143,310.5],['043',144.5,323],['034',162,333.5],['024',164,345.5],['013',149,359.5],['003',150,372]],
  [['096',185,255],['086',187,268],['075',172,282],['065',173.5,294.5],['055',175,306.5],['045',193,317],['036',194,329.5],['026',196,341.5],['015',181.5,355.5],['005',183,368]],
  [['098',216.5,251.5],['088',218,263.5],['078',220,276],['068',221,288],['057',207,302.5],['048',225,312.5],['038',226.5,325],['028',228,337],['018',213,351.5],['007',215,364]],
  [['100',248,247],['090',250,259],['080',251.5,271.5],['070',253,284],['060',255,296],['050',256.5,308],['040',258,320.5],['030',260,332.5],['019',246,347],['009',247.5,359.5]],
];
sheets.innerHTML = columns.flat().map(([n, x, y]) => `<text x="${x}" y="${y + 1.8}" textLength="21">082F${n}</text>`).join('');
</script>
</body>
</html>
